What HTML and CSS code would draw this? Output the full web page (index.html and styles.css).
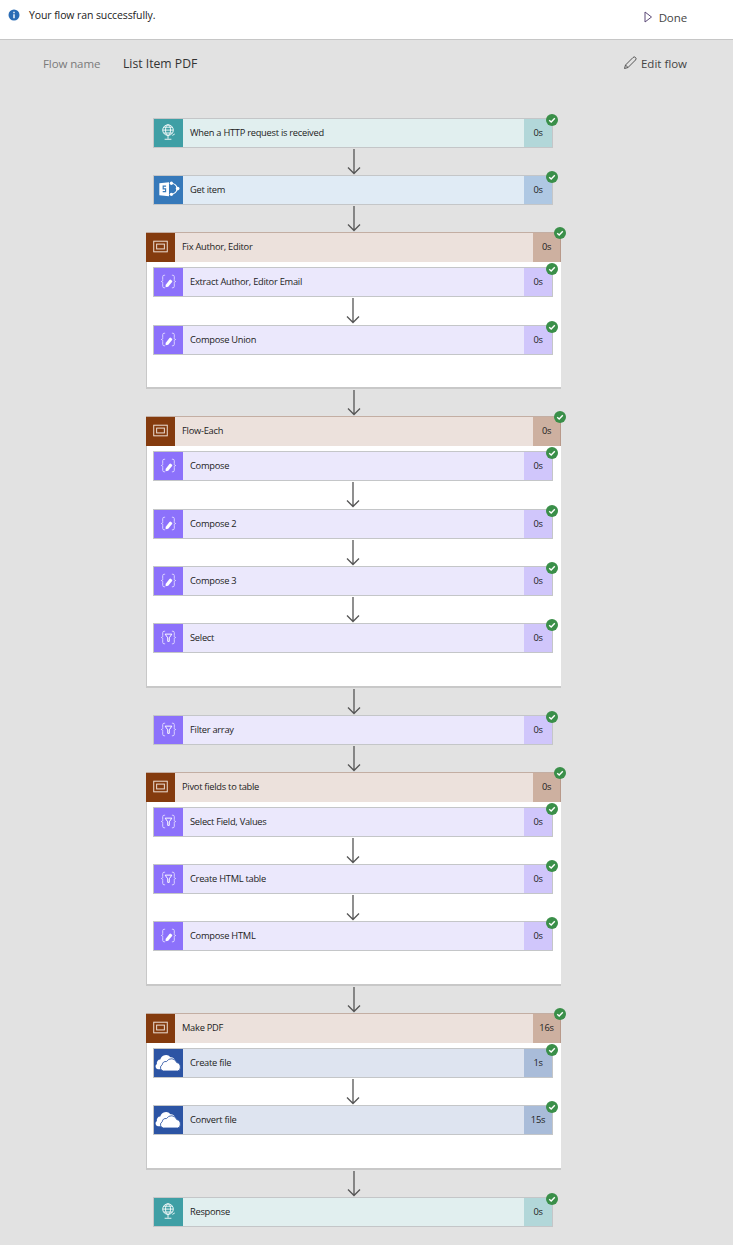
FILE: index.html
```html
<!DOCTYPE html>
<html lang="en">
<head>
<meta charset="utf-8">
<title>List Item PDF</title>
<link rel="stylesheet" href="styles.css">
</head>
<body>
<svg class="defs" width="0" height="0" aria-hidden="true">
  <defs>
    <symbol id="i-globe" viewBox="0 0 29 29">
      <g fill="none" stroke="#fff" stroke-width="0.900">
        <circle cx="14" cy="11.500" r="5.500"/>
        <ellipse cx="14" cy="11.500" rx="2.600" ry="5.500"/>
        <path d="M8.500 11.500h11M9.500 8.500h9M9.500 14.500h9M14 17v3.500M10.500 21h7M18.500 17l2.500 -1.500"/>
      </g>
    </symbol>
    <symbol id="i-sp" viewBox="0 0 29 29">
      <path d="M17 7.500a6.500 6.500 0 0 1 6.500 5.500a6.500 6.500 0 0 1 -6.500 6" fill="none" stroke="#fff" stroke-width="1.200"/>
      <circle cx="17.500" cy="7.500" r="1.700" fill="#fff"/>
      <circle cx="24" cy="13" r="1.900" fill="#fff"/>
      <circle cx="17.500" cy="19" r="1.700" fill="#fff"/>
      <path d="M5 7.500l10-1v14.500l-10-1z" fill="#fff"/>
      <path d="M12 10.500h-3v2.800h2.500v2.900h-3" fill="none" stroke="#3679ba" stroke-width="1.200"/>
    </symbol>
    <symbol id="i-cloud" viewBox="0 0 29 29">
      <path d="M3.500 21a3 3 0 0 1-1-5.500a3.500 3.500 0 0 1 3.500-4.500a6 6 0 0 1 10.500-2.500a4.500 4.500 0 0 1 5 4v8.500z" fill="#fff"/>
      <path d="M9 22.800a3.500 3.500 0 0 1-1-6.500a4 4 0 0 1 4.500-3.300a5.800 5.800 0 0 1 10.500 1a4.500 4.500 0 0 1 3.700 5.300a3.500 3.500 0 0 1-2.700 3.500z" fill="#fff" stroke="#2c54a4" stroke-width="0.900"/>
    </symbol>
    <symbol id="i-scope" viewBox="0 0 29 29">
      <rect x="7.500" y="8.500" width="14" height="11" fill="none" stroke="#f0e4dc" stroke-width="1"/>
      <rect x="10.500" y="11.500" width="8" height="5" fill="none" stroke="#f0e4dc" stroke-width="1"/>
    </symbol>
    <symbol id="i-compose" viewBox="0 0 29 29">
      <path d="M11 7.500h-1a1.500 1.500 0 0 0-1.500 1.500v3a1.500 1.500 0 0 1-1.500 2a1.500 1.500 0 0 1 1.500 2v3a1.500 1.500 0 0 0 1.500 1.500h1M18 7.500h1a1.500 1.500 0 0 1 1.500 1.500v3a1.500 1.500 0 0 0 1.500 2a1.500 1.500 0 0 0-1.500 2v3a1.500 1.500 0 0 1-1.500 1.500h-1" fill="none" stroke="#e6e0ff" stroke-width="0.900"/>
      <path d="M11.500 17.500l4-5l1-0.500l2 1.500l-0.300 1l-4 5l-2.700 0.500z" fill="#fff"/>
    </symbol>
    <symbol id="i-select" viewBox="0 0 29 29">
      <path d="M11 7.500h-1a1.500 1.500 0 0 0-1.500 1.500v3a1.500 1.500 0 0 1-1.500 2a1.500 1.500 0 0 1 1.500 2v3a1.500 1.500 0 0 0 1.500 1.500h1M18 7.500h1a1.500 1.500 0 0 1 1.500 1.500v3a1.500 1.500 0 0 0 1.500 2a1.500 1.500 0 0 0-1.500 2v3a1.500 1.500 0 0 1-1.500 1.500h-1" fill="none" stroke="#e6e0ff" stroke-width="0.900"/>
      <path d="M11 10.500h7l-2.700 3.800v3.700h-1.600v-3.700z" fill="none" stroke="#fff" stroke-width="1"/>
    </symbol>
    <symbol id="i-check" viewBox="0 0 12 12">
      <circle cx="6" cy="6" r="6" fill="#3a8f49"/>
      <path d="M3.200 6.200l2 1.800l3.600-3.800" fill="none" stroke="#fff" stroke-width="1.400"/>
    </symbol>
    <symbol id="i-arrow" viewBox="0 0 14 27">
      <path d="M7 1v24.500M1 19.500l6 6l6-6" fill="none" stroke="#555" stroke-width="1.300"/>
    </symbol>
  </defs>
</svg>

<header class="topbar">
  <div class="status">
    <svg class="info" viewBox="0 0 12 12" width="12" height="12"><circle cx="6" cy="6" r="5.500" fill="#2b6cb5"/><path d="M6 2.800v1.400M6 5.200v4" stroke="#fff" stroke-width="1.400"/></svg>
    <span>Your flow ran successfully.</span>
  </div>
  <div class="done">
    <svg viewBox="0 0 9 12" width="9" height="12"><path d="M1 1l6.500 5l-6.500 5z" fill="none" stroke="#5c4a78" stroke-width="1"/></svg>
    <span>Done</span>
  </div>
</header>

<div class="namebar">
  <span class="name-label">Flow name</span>
  <span class="name-value">List Item PDF</span>
  <span class="edit">
    <svg viewBox="0 0 14 14" width="14" height="14"><path d="M1.500 12.500l1-3.500l7.500-7.500a1.500 1.500 0 0 1 2.500 2.500l-7.500 7.500z M2.500 9l2.500 2.500" fill="none" stroke="#555" stroke-width="1"/></svg>
    <span>Edit flow</span>
  </span>
</div>

<main class="flow">
  <div class="card teal"><span class="icon"><svg><use href="#i-globe"/></svg></span><span class="label">When a HTTP request is received</span><span class="dur">0s</span><svg class="ok"><use href="#i-check"/></svg></div>
  <div class="conn"><svg><use href="#i-arrow"/></svg></div>
  <div class="card blue"><span class="icon"><svg><use href="#i-sp"/></svg></span><span class="label">Get item</span><span class="dur">0s</span><svg class="ok"><use href="#i-check"/></svg></div>
  <div class="conn"><svg><use href="#i-arrow"/></svg></div>

  <section class="scope">
    <div class="scope-head"><span class="icon"><svg><use href="#i-scope"/></svg></span><span class="label">Fix Author, Editor</span><span class="dur">0s</span><svg class="ok"><use href="#i-check"/></svg></div>
    <div class="scope-body">
      <div class="card purple"><span class="icon"><svg><use href="#i-compose"/></svg></span><span class="label">Extract Author, Editor Email</span><span class="dur">0s</span><svg class="ok"><use href="#i-check"/></svg></div>
      <div class="conn"><svg><use href="#i-arrow"/></svg></div>
      <div class="card purple"><span class="icon"><svg><use href="#i-compose"/></svg></span><span class="label">Compose Union</span><span class="dur">0s</span><svg class="ok"><use href="#i-check"/></svg></div>
    </div>
  </section>
  <div class="conn"><svg><use href="#i-arrow"/></svg></div>

  <section class="scope">
    <div class="scope-head"><span class="icon"><svg><use href="#i-scope"/></svg></span><span class="label">Flow-Each</span><span class="dur">0s</span><svg class="ok"><use href="#i-check"/></svg></div>
    <div class="scope-body">
      <div class="card purple"><span class="icon"><svg><use href="#i-compose"/></svg></span><span class="label">Compose</span><span class="dur">0s</span><svg class="ok"><use href="#i-check"/></svg></div>
      <div class="conn"><svg><use href="#i-arrow"/></svg></div>
      <div class="card purple"><span class="icon"><svg><use href="#i-compose"/></svg></span><span class="label">Compose 2</span><span class="dur">0s</span><svg class="ok"><use href="#i-check"/></svg></div>
      <div class="conn"><svg><use href="#i-arrow"/></svg></div>
      <div class="card purple"><span class="icon"><svg><use href="#i-compose"/></svg></span><span class="label">Compose 3</span><span class="dur">0s</span><svg class="ok"><use href="#i-check"/></svg></div>
      <div class="conn"><svg><use href="#i-arrow"/></svg></div>
      <div class="card purple"><span class="icon"><svg><use href="#i-select"/></svg></span><span class="label">Select</span><span class="dur">0s</span><svg class="ok"><use href="#i-check"/></svg></div>
    </div>
  </section>
  <div class="conn"><svg><use href="#i-arrow"/></svg></div>

  <div class="card purple"><span class="icon"><svg><use href="#i-select"/></svg></span><span class="label">Filter array</span><span class="dur">0s</span><svg class="ok"><use href="#i-check"/></svg></div>
  <div class="conn"><svg><use href="#i-arrow"/></svg></div>

  <section class="scope">
    <div class="scope-head"><span class="icon"><svg><use href="#i-scope"/></svg></span><span class="label">Pivot fields to table</span><span class="dur">0s</span><svg class="ok"><use href="#i-check"/></svg></div>
    <div class="scope-body">
      <div class="card purple"><span class="icon"><svg><use href="#i-select"/></svg></span><span class="label">Select Field, Values</span><span class="dur">0s</span><svg class="ok"><use href="#i-check"/></svg></div>
      <div class="conn"><svg><use href="#i-arrow"/></svg></div>
      <div class="card purple"><span class="icon"><svg><use href="#i-select"/></svg></span><span class="label">Create HTML table</span><span class="dur">0s</span><svg class="ok"><use href="#i-check"/></svg></div>
      <div class="conn"><svg><use href="#i-arrow"/></svg></div>
      <div class="card purple"><span class="icon"><svg><use href="#i-compose"/></svg></span><span class="label">Compose HTML</span><span class="dur">0s</span><svg class="ok"><use href="#i-check"/></svg></div>
    </div>
  </section>
  <div class="conn"><svg><use href="#i-arrow"/></svg></div>

  <section class="scope">
    <div class="scope-head"><span class="icon"><svg><use href="#i-scope"/></svg></span><span class="label">Make PDF</span><span class="dur">16s</span><svg class="ok"><use href="#i-check"/></svg></div>
    <div class="scope-body">
      <div class="card navy"><span class="icon"><svg><use href="#i-cloud"/></svg></span><span class="label">Create file</span><span class="dur">1s</span><svg class="ok"><use href="#i-check"/></svg></div>
      <div class="conn"><svg><use href="#i-arrow"/></svg></div>
      <div class="card navy"><span class="icon"><svg><use href="#i-cloud"/></svg></span><span class="label">Convert file</span><span class="dur">15s</span><svg class="ok"><use href="#i-check"/></svg></div>
    </div>
  </section>
  <div class="conn"><svg><use href="#i-arrow"/></svg></div>

  <div class="card teal"><span class="icon"><svg><use href="#i-globe"/></svg></span><span class="label">Response</span><span class="dur">0s</span><svg class="ok"><use href="#i-check"/></svg></div>
</main>
</body>
</html>
```
FILE: styles.css
```css
html, body {
  margin: 0;
  padding: 0;
}
body {
  height: 1245px;
  overflow: hidden;
  background: #e2e2e2;
  color: #222;
  font-family: "Open Sans", "Noto Sans", "Liberation Sans", sans-serif;
}
.defs {
  display: block;
  height: 0;
}
.topbar {
  box-sizing: border-box;
  height: 40px;
  background: #fff;
  border-bottom: 1px solid #c6c6c6;
  display: flex;
  justify-content: space-between;
  padding: 0 46px 0 8px;
  font-size: 10.500px;
  letter-spacing: -0.100px;
}
.status {
  display: flex;
  align-items: center;
  gap: 9px;
  height: 30px;
}
.info {
  display: block;
}
.done {
  display: flex;
  align-items: center;
  gap: 6px;
  height: 34px;
  font-size: 11.500px;
  color: #444;
}
.done svg {
  display: block;
}
.namebar {
  display: flex;
  align-items: center;
  height: 46px;
  padding: 0 46px 0 43px;
  font-size: 11.500px;
}
.name-label {
  width: 80px;
  color: #7a7a7a;
  letter-spacing: -0.100px;
}
.name-value {
  flex: 1;
  color: #333;
  font-size: 12.200px;
}
.edit {
  display: flex;
  align-items: center;
  gap: 4px;
  color: #444;
}
.edit svg {
  display: block;
}
.flow {
  box-sizing: border-box;
  width: 415px;
  margin: 32px 0 0 146px;
  padding: 0;
  display: flex;
  flex-direction: column;
}
.flow > .card {
  margin: 0 8px 0 7px;
}
.card {
  position: relative;
  box-sizing: border-box;
  flex: none;
  width: 400px;
  height: 30px;
  display: flex;
  align-items: stretch;
  border: 1px solid #c4c6c8;
  font-size: 9.300px;
  letter-spacing: -0.260px;
  line-height: 28px;
}
.card .icon {
  flex: none;
  width: 29px;
  display: block;
}
.icon svg {
  display: block;
  width: 29px;
  height: 28px;
}
.label {
  flex: 1;
  padding-left: 7px;
}
.dur {
  flex: none;
  width: 28px;
  text-align: center;
}
.ok {
  position: absolute;
  top: -5px;
  right: -6px;
  width: 12px;
  height: 12px;
}
.teal {
  background: #e1efef;
}
.teal .icon {
  background: #3f9fa5;
}
.teal .dur {
  background: #b2d7d9;
}
.blue {
  background: #e0ebf5;
}
.blue .icon {
  background: #3679ba;
}
.blue .dur {
  background: #afc8e3;
}
.purple {
  background: #ebe8fc;
}
.purple .icon {
  background: #8c71fb;
}
.purple .dur {
  background: #d0c6fb;
}
.navy {
  background: #dee4f0;
}
.navy .icon {
  background: #2c54a4;
}
.navy .dur {
  background: #a9bcd9;
}
.conn {
  flex: none;
  height: 27.200px;
  display: flex;
  justify-content: center;
}
.conn svg {
  display: block;
  width: 14px;
  height: 27px;
}
.scope {
  flex: none;
  display: flex;
  flex-direction: column;
}
.scope-head {
  position: relative;
  box-sizing: border-box;
  height: 30px;
  display: flex;
  align-items: stretch;
  background: #ece1dc;
  border-top: 1px solid #c3aea3;
  font-size: 9.300px;
  letter-spacing: -0.260px;
  line-height: 28px;
}
.scope-head .icon {
  flex: none;
  width: 29px;
  background: #843b0e;
}
.scope-head .label {
  padding-left: 7px;
}
.scope-head .dur {
  width: 27px;
  background: #cdb0a0;
  border-right: 1px solid #b8998a;
}
.scope-head .ok {
  top: -6px;
  right: -5px;
}
.scope-body {
  box-sizing: border-box;
  display: flex;
  flex-direction: column;
  background: #fff;
  padding: 5px 8px 32.600px 6px;
  border-left: 1px solid #c8c8c8;
  border-bottom: 2px solid #c8c8c8;
}
.scope-body .conn {
  width: 400px;
}
```
